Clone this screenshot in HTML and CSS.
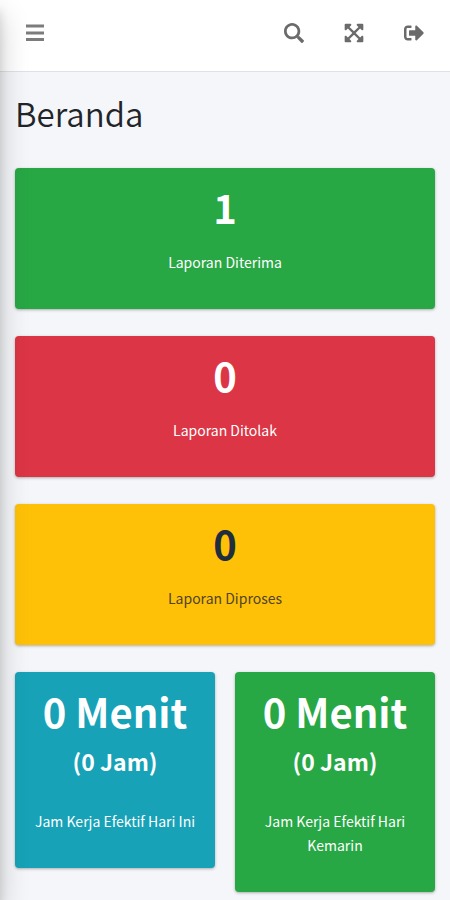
FILE: index.html
```html
<!DOCTYPE html>
<html lang="id">
<head>
<meta charset="utf-8">
<meta name="viewport" content="width=device-width, initial-scale=1">
<title>Beranda</title>
<link rel="stylesheet" href="styles.css">
</head>
<body>
<aside class="sidebar" aria-hidden="true"></aside>
<header class="navbar">
  <button class="nav-button menu-button" type="button" aria-label="Menu">
    <svg class="icon" viewBox="0 0 20 20"><path d="M1 1.500h18v3H1zM1 8.500h18v3H1zM1 15h18v3H1z"/></svg>
  </button>
  <nav class="nav-actions">
    <button class="nav-button" type="button" aria-label="Cari">
      <svg class="icon" viewBox="0 0 512 512"><path d="M505 442.700L405.300 343c-4.500-4.500-10.600-7-17-7H372c27.600-35.300 44-79.700 44-128C416 93.100 322.900 0 208 0S0 93.100 0 208s93.100 208 208 208c48.300 0 92.700-16.400 128-44v16.300c0 6.400 2.500 12.500 7 17l99.700 99.700c9.400 9.400 24.600 9.400 33.900 0l28.300-28.300c9.400-9.400 9.400-24.600.1-34zM208 346c-76 0-138-62-138-138S132 70 208 70s138 62 138 138-62 138-138 138z"/></svg>
    </button>
    <button class="nav-button" type="button" aria-label="Layar penuh">
      <svg class="icon" viewBox="-8 16 464 480"><path d="M448 344v112a23.940 23.940 0 0 1-24 24H312c-21.390 0-32.090-25.900-17-41l36.200-36.200L224 295.600 116.770 402.900 153 439c15.090 15.100 4.390 41-17 41H24a23.940 23.940 0 0 1-24-24V344c0-21.400 25.890-32.100 41-17l36.190 36.200L184.460 256 77.180 148.700 41 185c-15.100 15.100-41 4.400-41-17V56a23.940 23.940 0 0 1 24-24h112c21.390 0 32.090 25.900 17 41l-36.200 36.200L224 216.400l107.230-107.300L295 73c-15.090-15.100-4.390-41 17-41h112a23.940 23.940 0 0 1 24 24v112c0 21.400-25.890 32.100-41 17l-36.190-36.200L263.540 256l107.280 107.300L407 327.100c15.100-15.200 41-4.500 41 16.900z"/></svg>
    </button>
    <button class="nav-button" type="button" aria-label="Keluar">
      <svg class="icon" viewBox="0 0 512 512"><path d="M497 273L329 441c-15 15-41 4.500-41-17v-96H152c-13.300 0-24-10.700-24-24v-96c0-13.300 10.700-24 24-24h136V88c0-21.400 25.900-32 41-17l168 168c9.300 9.400 9.300 24.600 0 34zM192 436v-40c0-6.600-5.400-12-12-12H96c-17.700 0-32-14.300-32-32V160c0-17.700 14.300-32 32-32h84c6.600 0 12-5.400 12-12V76c0-6.600-5.400-12-12-12H96c-53 0-96 43-96 96v192c0 53 43 96 96 96h84c6.600 0 12-5.400 12-12z"/></svg>
    </button>
  </nav>
</header>
<main class="content">
  <h1 class="title">Beranda</h1>
  <div class="cards">
    <section class="card card-wide green">
      <h2 class="value">1</h2>
      <p class="caption">Laporan Diterima</p>
    </section>
    <section class="card card-wide red">
      <h2 class="value">0</h2>
      <p class="caption">Laporan Ditolak</p>
    </section>
    <section class="card card-wide yellow">
      <h2 class="value">0</h2>
      <p class="caption">Laporan Diproses</p>
    </section>
    <section class="card teal">
      <h2 class="value">0 Menit</h2>
      <h3 class="subvalue">(0 Jam)</h3>
      <p class="caption">Jam Kerja Efektif Hari Ini</p>
    </section>
    <section class="card green">
      <h2 class="value">0 Menit</h2>
      <h3 class="subvalue">(0 Jam)</h3>
      <p class="caption">Jam Kerja Efektif Hari Kemarin</p>
    </section>
  </div>
</main>
</body>
</html>
```
FILE: styles.css
```css
* {
  box-sizing: border-box;
}

body {
  margin: 0;
  background: #f4f6f9;
  color: #212529;
  font-family: "Noto Sans CJK JP", "Noto Sans", sans-serif;
  font-size: 14px;
  line-height: 24px;
}

h1, h2, h3, p {
  margin: 0;
}

/* Off-canvas drawer: only its shadow reaches the page */
.sidebar {
  position: fixed;
  top: 0;
  bottom: 0;
  left: -250px;
  width: 250px;
  z-index: 2;
  box-shadow: 0 14px 28px rgba(0, 0, 0, 0.2), 0 10px 10px rgba(0, 0, 0, 0.12);
}

.navbar {
  display: flex;
  justify-content: space-between;
  padding: 0 6px 6px 5px;
  background: #fff;
  border-bottom: 1px solid #dee2e6;
}

.nav-actions {
  display: flex;
}

.nav-button {
  display: flex;
  align-items: center;
  justify-content: center;
  width: 60px;
  height: 65px;
  padding: 0;
  border: 0;
  background: none;
  color: #6b6b6b;
}

.menu-button {
  color: #7c7c7c;
}

.icon {
  width: 20px;
  height: 20px;
  fill: currentColor;
}

.content {
  padding: 17px 15px;
}

.title {
  padding-bottom: 31px;
  font-size: 33px;
  font-weight: 350;
  line-height: 48px;
}

.cards {
  display: grid;
  grid-template-columns: 1fr 1fr;
  align-items: start;
  gap: 27px 20px;
}

.card {
  padding: 11px 12px 35px;
  border-radius: 4px;
  box-shadow: 0 1px 3px rgba(0, 0, 0, 0.3);
  color: #fff;
  text-align: center;
}

.card-wide {
  grid-column: 1 / -1;
}

.value {
  font-size: 40px;
  font-weight: 700;
  line-height: 56px;
}

.subvalue {
  font-size: 23px;
  font-weight: 700;
  line-height: 44px;
}

.caption {
  padding-top: 15px;
}

.subvalue + .caption {
  padding-top: 26px;
}

.green {
  background: #28a745;
}

.red {
  background: #dc3545;
}

.yellow {
  background: #ffc107;
  color: #1f2d3d;
}

.yellow .caption {
  color: #4f4423;
}

.teal {
  background: #17a2b8;
}
```
